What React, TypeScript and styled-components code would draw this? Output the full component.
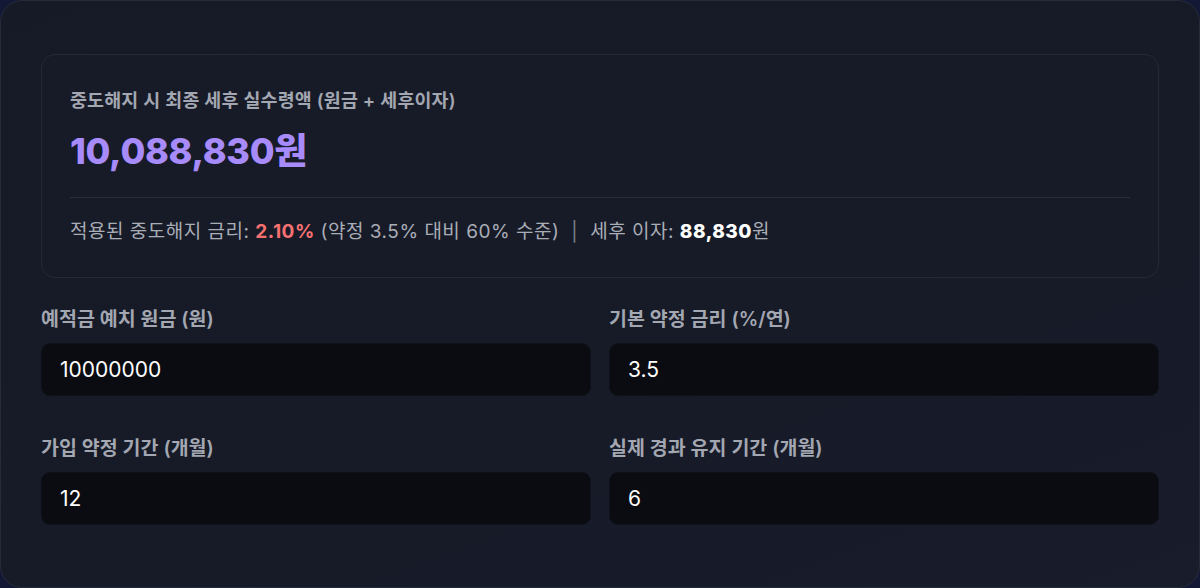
import { useState } from 'react';
import styled, { createGlobalStyle } from 'styled-components';

const GlobalStyle = createGlobalStyle`
  html, body {
    margin: 0;
    padding: 0;
    background: #131834;
  }
  body {
    font-family: Inter, 'Noto Sans CJK KR', 'Noto Sans', sans-serif;
    -webkit-font-smoothing: antialiased;
  }
`;

const fields = [
  { key: 'principal', label: '예적금 예치 원금 (원)' },
  { key: 'rate', label: '기본 약정 금리 (%/연)' },
  { key: 'term', label: '가입 약정 기간 (개월)' },
  { key: 'elapsed', label: '실제 경과 유지 기간 (개월)' },
] as const;

type FieldKey = (typeof fields)[number]['key'];

const App = () => {
  const [values, setValues] = useState<Record<FieldKey, string>>({
    principal: '10000000',
    rate: '3.5',
    term: '12',
    elapsed: '6',
  });

  const principal = Number(values.principal) || 0;
  const rate = Number(values.rate) || 0;
  const elapsed = Number(values.elapsed) || 0;
  const earlyRate = rate * 0.6;
  const interest = Math.round((principal * (earlyRate / 100) * elapsed) / 12 * 0.846);
  const total = principal + interest;

  return (
    <>
      <GlobalStyle />
      <Card>
        <ResultBox>
          <ResultLabel>중도해지 시 최종 세후 실수령액 (원금 + 세후이자)</ResultLabel>
          <ResultAmount>{total.toLocaleString('ko-KR')}원</ResultAmount>
          <Divider />
          <Detail>
            적용된 중도해지 금리: <Rate>{earlyRate.toFixed(2)}%</Rate> (약정 {values.rate}% 대비 60% 수준)
            <Sep>|</Sep>
            세후 이자: <Strong>{interest.toLocaleString('ko-KR')}</Strong>원
          </Detail>
        </ResultBox>
        <FieldGrid>
          {fields.map((f) => (
            <Field key={f.key}>
              <FieldLabel>{f.label}</FieldLabel>
              <Input
                value={values[f.key]}
                onChange={(e) => setValues({ ...values, [f.key]: e.target.value })}
              />
            </Field>
          ))}
        </FieldGrid>
      </Card>
    </>
  );
};

const Card = styled.div`
  box-sizing: border-box;
  width: 1200px;
  height: 588px;
  padding: 53px 40px 0;
  border: 1px solid #262b3a;
  border-radius: 22px;
  background: linear-gradient(160deg, #161a26 0%, #171b28 60%, #181c2b 100%);
`;

const ResultBox = styled.div`
  box-sizing: border-box;
  height: 224px;
  padding: 34px 28px 0;
  border: 1px solid #242939;
  border-radius: 14px;
  background: #171b28;
`;

const ResultLabel = styled.div`
  font-size: 18.4px;
  line-height: 22px;
  font-weight: 600;
  letter-spacing: 0.2px;
  color: #a3a7b1;
`;

const ResultAmount = styled.div`
  margin-top: 18px;
  font-size: 36px;
  line-height: 44px;
  font-weight: 800;
  letter-spacing: -0.3px;
  color: #a78bfa;
`;

const Divider = styled.div`
  height: 1px;
  margin-top: 24px;
  background: #272c3b;
`;

const Detail = styled.div`
  margin-top: 22px;
  font-size: 19px;
  line-height: 24px;
  letter-spacing: 0.5px;
  color: #a9adb6;
`;

const Rate = styled.span`
  font-weight: 700;
  color: #f87171;
`;

const Strong = styled.span`
  font-weight: 800;
  color: #ffffff;
`;

const Sep = styled.span`
  margin: 0 12px;
  color: #7d818c;
`;

const FieldGrid = styled.div`
  display: grid;
  grid-template-columns: 1fr 1fr;
  column-gap: 18px;
  row-gap: 40px;
  margin-top: 29px;
`;

const Field = styled.div`
  display: flex;
  flex-direction: column;
  gap: 12px;
`;

const FieldLabel = styled.label`
  font-size: 19.5px;
  line-height: 24px;
  font-weight: 600;
  letter-spacing: 0;
  color: #a3a7b1;
`;

const Input = styled.input`
  box-sizing: border-box;
  height: 53px;
  padding: 0 18px;
  border: 1px solid #10121a;
  border-radius: 9px;
  background: #0b0c11;
  color: #ffffff;
  font-family: Inter, 'Noto Sans CJK KR', sans-serif;
  font-size: 21px;
  outline: none;
`;

export default App;
